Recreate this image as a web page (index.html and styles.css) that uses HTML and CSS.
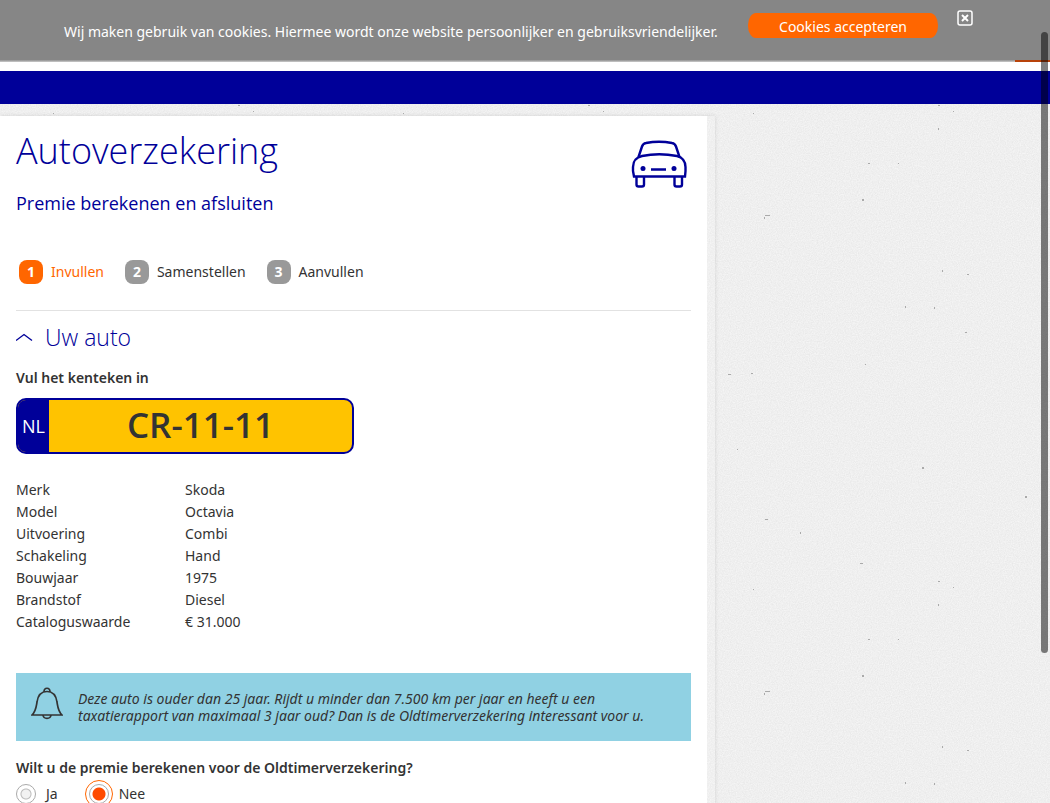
FILE: index.html
```html
<!DOCTYPE html>
<html lang="nl">
<head>
<meta charset="utf-8">
<title>Autoverzekering</title>
<link rel="stylesheet" href="styles.css">
</head>
<body>
<div class="cookiebar">
  <p class="cookiebar-text">Wij maken gebruik van cookies. Hiermee wordt onze website persoonlijker en gebruiksvriendelijker.</p>
  <button class="cookiebar-accept" type="button">Cookies accepteren</button>
  <button class="cookiebar-close" type="button" aria-label="Sluiten">
    <svg width="16" height="16" viewBox="0 0 16 16" fill="none" stroke="#fff"><rect x="1" y="1" width="14" height="14" rx="2" stroke-width="1.5"/><path d="M5 5l6 6M11 5l-6 6" stroke-width="2"/></svg>
  </button>
</div>
<div class="topline"></div>
<nav class="navbar" aria-label="Hoofdmenu"></nav>
<div class="page">
  <div class="sheet">
    <main class="card">
      <header class="head">
        <div>
          <h1 class="title">Autoverzekering</h1>
          <p class="subtitle">Premie berekenen en afsluiten</p>
        </div>
        <svg class="car" width="56" height="48" viewBox="0 0 56 48" fill="none" stroke="#009" stroke-width="2.4">
          <path d="M7.500 17L11 6.500Q12 3.500 15 3Q28 .5 41 3Q44 3.500 45 6.500L48.500 17"/>
          <path d="M3 36.500H54L54.500 31V27C54.500 21 51 17 46 16Q28 12.500 11 16C6 17 2 21 2 27V31Z"/>
          <path d="M5.500 37V44.500Q5.500 46.500 7.500 46.500H11Q13 46.500 13 44.500V37M43.500 37V44.500Q43.500 46.500 45.500 46.500H49Q51 46.500 51 44.500V37M20 29.500H35"/>
          <circle cx="12" cy="28.500" r="2.500" fill="#009" stroke="none"/><circle cx="43" cy="28.500" r="2.500" fill="#009" stroke="none"/>
        </svg>
      </header>
      <ol class="steps">
        <li class="step step-active"><span class="step-num">1</span>Invullen</li>
        <li class="step"><span class="step-num">2</span>Samenstellen</li>
        <li class="step"><span class="step-num">3</span>Aanvullen</li>
      </ol>
      <section class="section">
        <h2 class="section-title"><svg width="17" height="10" viewBox="0 0 17 10" fill="none" stroke="#009" stroke-width="1.400"><path d="M0 7.500L8 1.500L16 7.500"/></svg>Uw auto</h2>
        <label class="label" for="plate">Vul het kenteken in</label>
        <div class="plate"><span class="plate-country">NL</span><input class="plate-input" id="plate" type="text" value="CR-11-11"></div>
        <dl class="specs">
          <dt>Merk</dt><dd>Skoda</dd>
          <dt>Model</dt><dd>Octavia</dd>
          <dt>Uitvoering</dt><dd>Combi</dd>
          <dt>Schakeling</dt><dd>Hand</dd>
          <dt>Bouwjaar</dt><dd>1975</dd>
          <dt>Brandstof</dt><dd>Diesel</dd>
          <dt>Cataloguswaarde</dt><dd>€ 31.000</dd>
        </dl>
        <div class="notice">
          <svg class="bell" width="32" height="34" viewBox="0 0 32 34" fill="none" stroke="#333" stroke-width="1.700"><path d="M1 28C5 24 5 21 6 15C7 8 10 4.500 16 4.500S25 8 26 15C27 21 27 24 31 28Z"/><path d="M13 5C13 0 19 0 19 5M12 28C12.500 32.500 19.500 32.500 20 28"/></svg>
          <p class="notice-text">Deze auto is ouder dan 25 jaar. Rijdt u minder dan 7.500 km per jaar en heeft u een<br>taxatierapport van maximaal 3 jaar oud? Dan is de Oldtimerverzekering interessant voor u.</p>
        </div>
        <fieldset class="choice">
          <legend class="label">Wilt u de premie berekenen voor de Oldtimerverzekering?</legend>
          <div class="options">
            <label class="option"><input class="radio" type="radio" name="oldtimer">Ja</label>
            <label class="option"><input class="radio" type="radio" name="oldtimer" checked>Nee</label>
          </div>
        </fieldset>
      </section>
    </main>
  </div>
</div>
<div class="scrollthumb"></div>
</body>
</html>
```
FILE: styles.css
```css
* { box-sizing: border-box; }
html { overflow: hidden; }
body {
  margin: 0;
  height: 100vh;
  overflow: hidden;
  display: flex;
  flex-direction: column;
  font: 14px/22px "Noto Sans", "Open Sans", sans-serif;
  color: #333;
  background: #fff;
}
h1, h2, p, ol, dl, dd, fieldset { margin: 0; padding: 0; }
button, input { font: inherit; }

.cookiebar {
  flex: none;
  display: flex;
  align-items: flex-start;
  height: 60px;
  padding-left: 64px;
  color: #fff;
  background: #868686;
}
.cookiebar-text { width: 684px; padding-top: 21px; white-space: nowrap; }
.cookiebar-accept {
  width: 190px;
  height: 25px;
  margin-top: 13px;
  padding: 0;
  border: 0;
  border-radius: 8px / 12px;
  color: #fff;
  background: #f60;
  line-height: 27px;
}
.cookiebar-close { margin: 10px 0 0 19px; padding: 0; border: 0; background: none; line-height: 0; }
.topline {
  flex: none;
  height: 11px;
  background:
    linear-gradient(#b8430a, #b8430a) right top / 35px 2px no-repeat,
    linear-gradient(#8f8f8f, #ccc) left top / 100% 2px no-repeat;
}
.navbar { flex: none; height: 33px; background: #009; }

.page {
  flex: 1 0 auto;
  padding-top: 12px;
  display: flex;
  background-color: #efefef;
  background-image: url("data:image/svg+xml,%3Csvg xmlns='http://www.w3.org/2000/svg' width='350' height='476'%3E%3Cfilter id='n' x='0' y='0' width='1' height='1' color-interpolation-filters='sRGB'%3E%3CfeTurbulence type='fractalNoise' baseFrequency='.85' numOctaves='2' stitchTiles='stitch'/%3E%3CfeColorMatrix values='.08 0 0 0 .897 .08 0 0 0 .897 .08 0 0 0 .897 0 0 0 0 1'/%3E%3C/filter%3E%3Crect width='350' height='476' filter='url(%23n)'/%3E%3Cpath d='M238 1h2v1h-2zM238 24h1v2h-1zM253 7h1v1h-1zM53 9h1v1h-1zM168 59h2v1h-2zM198 59h1v1h-1zM162 95h2v2h-2zM65 111h5v1h-5zM64 113h1v2h-1zM242 166h1v2h-1zM267 170h2v1h-2zM205 202h1v2h-1zM234 203h1v2h-1zM265 228h2v1h-2zM165 260h1v1h-1zM28 270h3v1h-3zM51 269h2v1h-2zM222 363h2v2h-2zM65 415h3v1h-3zM160 459h3v1h-3zM325 392h2v2h-2zM100 428h1v2h-1zM37 345h1v1h-1z' fill='%23aaa'/%3E%3C/svg%3E");
}
.sheet {
  width: 68.1%;
  padding-right: 8px;
  background: rgba(255, 255, 255, .1);
  box-shadow: 0 0 4px rgba(0, 0, 0, .12);
}
.card { height: 100%; padding: 12px 16px 0; background: #fff; }
.head { display: flex; justify-content: space-between; color: #009; font-family: "Open Sans", "Noto Sans", sans-serif; }
.title { font-size: 36px; line-height: 46px; font-weight: 300; }
.subtitle { margin-top: 17px; font-size: 18px; line-height: 24px; }
.car { flex: none; margin: 12px 4px 0 0; }
.steps {
  display: flex;
  gap: 21px;
  list-style: none;
  margin-top: 45px;
  padding: 0 0 26px 3px;
  border-bottom: 1px solid #e2e2e2;
}
.step { display: flex; align-items: center; gap: 8px; }
.step-active { color: #f60; }
.step-num {
  width: 24px;
  height: 24px;
  border-radius: 8px;
  line-height: 24px;
  text-align: center;
  font-weight: 700;
  color: #fff;
  background: #999;
}
.step-active .step-num { background: #f60; }
.section { padding-top: 12px; }
.section-title {
  display: flex;
  align-items: center;
  gap: 12px;
  margin-bottom: 15px;
  font-family: "Open Sans", "Noto Sans", sans-serif;
  font-size: 23px;
  line-height: 29px;
  font-weight: 300;
  color: #009;
}
.label { display: block; padding: 0; font-weight: 600; }
.plate {
  display: flex;
  width: 338px;
  height: 56px;
  margin-top: 9px;
  border: 2px solid #009;
  border-radius: 10px;
  overflow: hidden;
  background: #ffc300;
  font-family: "Open Sans", "Noto Sans", sans-serif;
}
.plate-country { flex: none; width: 31px; background: #009; color: #fff; font-size: 18px; line-height: 53px; text-align: center; }
.plate-input {
  flex: 1;
  min-width: 0;
  padding: 0 0 4px;
  border: 0;
  outline: 0;
  background: none;
  color: #333;
  font-size: 35px;
  font-weight: 600;
  text-align: center;
}
.specs { display: grid; grid-template-columns: 169px 1fr; margin: 25px 0 40px; }
.notice {
  display: flex;
  gap: 15px;
  min-height: 68px;
  padding: 14px 15px;
  background: #90d1e3;
}
.bell { flex: none; }
.notice-text { padding-top: 3px; line-height: 17px; font-style: italic; white-space: nowrap; }
.choice { margin-top: 16px; border: 0; }
.options { display: flex; gap: 31px; }
.option { display: flex; align-items: center; height: 30px; gap: 10px; }
.radio {
  appearance: none;
  width: 20px;
  height: 20px;
  margin: 0;
  border: 1px solid #aaa;
  border-radius: 50%;
  background: radial-gradient(circle, #f2f2f2 4px, #bbb 5px, #fff 6px);
}
.radio:checked {
  background: radial-gradient(circle, #ff4b00 6px, #fff 7px);
  outline: 1px solid #f60;
  outline-offset: 3px;
}
.scrollthumb {
  position: absolute;
  top: 32px;
  right: 2px;
  width: 7px;
  height: 621px;
  border-radius: 4px;
  background: rgba(0, 0, 0, .5);
}
```
